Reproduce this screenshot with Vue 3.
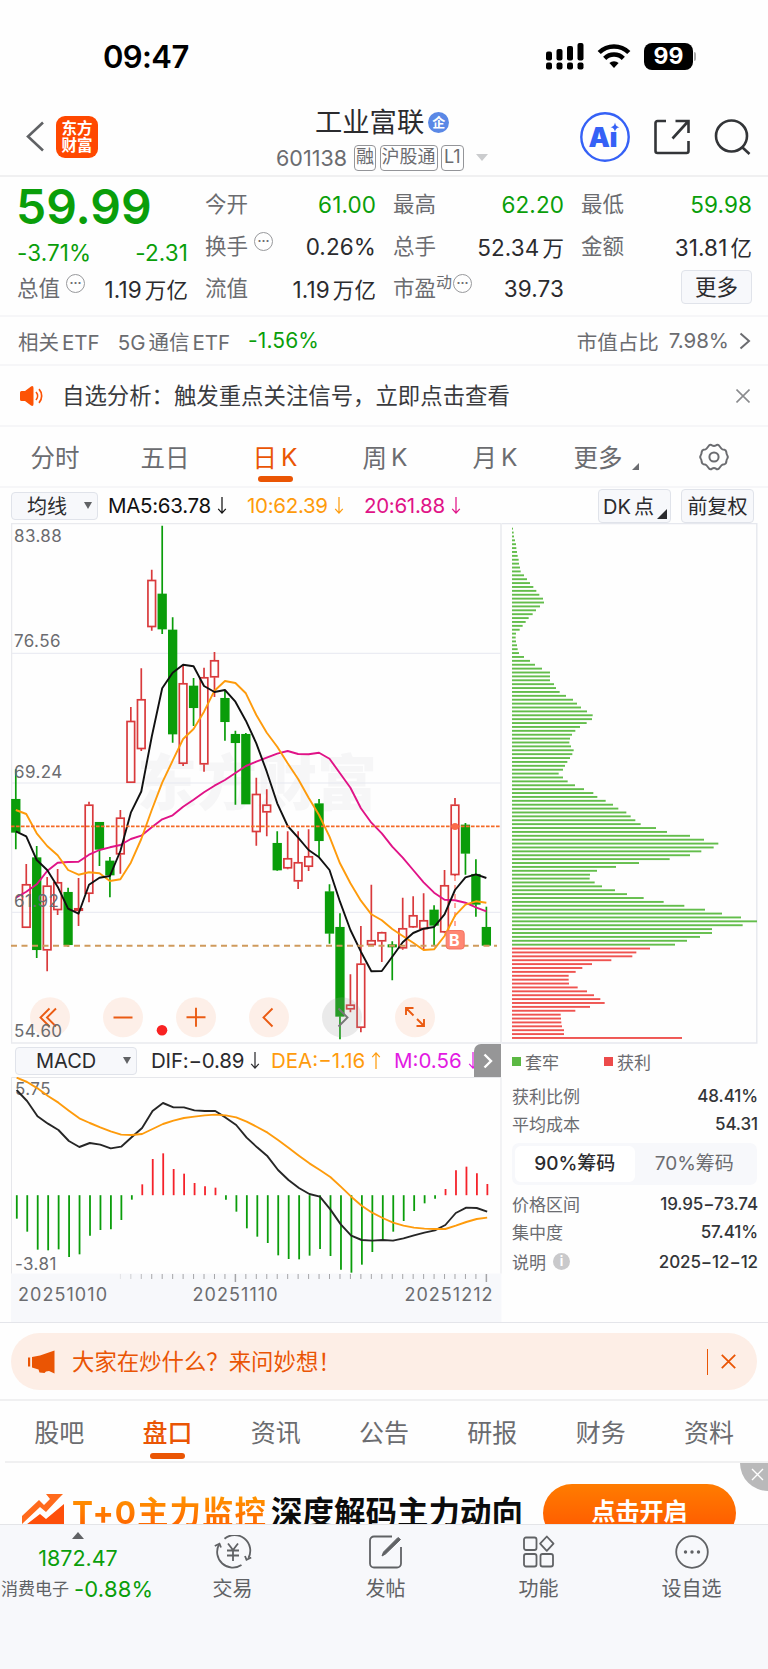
<template>
  <div class="page">
    <!-- Status bar -->
    <div class="status-bar">
      <span class="time">09:47</span>
      <div class="status-icons">
        <svg width="38" height="27" viewBox="0 0 38 27">
          <rect x="0" y="8.5" width="6" height="9" rx="2" />
          <rect x="10.5" y="6" width="6" height="11.500" rx="2" />
          <rect x="21" y="3" width="6" height="14.500" rx="2" />
          <rect x="31.500" y="0" width="6" height="17.500" rx="2" />
          <rect v-for="i in 4" :key="i" :x="(i - 1) * 10.5" y="19.500" width="6" height="7" rx="2" />
        </svg>
        <svg class="wifi" width="34" height="26" viewBox="0 0 34 26">
          <path d="M2.200 9.500a21 21 0 0 1 29.600 0" />
          <path d="M7.700 15.300a13.200 13.200 0 0 1 18.600 0" />
          <path d="M17 25l-4.600-5a6.600 6.600 0 0 1 9.200 0z" class="wifi-dot" />
        </svg>
        <div class="battery">99</div>
        <i class="battery-nub"></i>
      </div>
    </div>

    <!-- Header -->
    <header class="header">
      <svg class="back" width="20" height="31" viewBox="0 0 20 31"><path d="M18 1.500L3 15.500l15 14" /></svg>
      <div class="logo"><span>东方</span><span>财富</span></div>
      <div class="title-box">
        <div class="title-line">
          <h1>{{ stock.name }}</h1>
          <span class="ent-badge">企</span>
        </div>
        <div class="code-line">
          <span class="code">{{ stock.code }}</span>
          <span v-for="tag in stock.tags" :key="tag" class="tag">{{ tag }}</span>
          <i class="caret"></i>
        </div>
      </div>
      <div class="header-icons">
        <svg width="52" height="52" viewBox="0 0 52 52">
          <circle cx="26" cy="26" r="23.700" fill="none" stroke="#3561f6" stroke-width="2.400" />
          <text x="9.500" y="36" class="ai-text">A</text>
          <text x="30.500" y="36" class="ai-text">ı</text>
          <path d="M36 11.500c.8 3.200 1.500 3.900 4.500 4.700-3 .8-3.700 1.500-4.500 4.700-.8-3.200-1.500-3.900-4.500-4.700 3-.8 3.700-1.500 4.500-4.700z" fill="#3561f6" />
        </svg>
        <svg class="line-icon share" width="38" height="38" viewBox="0 0 38 38">
          <path d="M13 3H4.500a2 2 0 0 0-2 2v28a2 2 0 0 0 2 2h29a2 2 0 0 0 2-2V23" />
          <path d="M19.500 20.500L35 3.500M22.500 3H35.500v12" />
        </svg>
        <svg class="line-icon" width="38" height="38" viewBox="0 0 38 38">
          <circle cx="17.500" cy="18" r="15.500" /><path d="M28.500 29.500l7 6.500" />
        </svg>
      </div>
    </header>

    <!-- Quote -->
    <section class="quote">
      <div class="quote-col">
        <div class="big-price">59.99</div>
        <div class="q-row change down"><span>-3.71%</span><span>-2.31</span></div>
        <div class="q-row">
          <span class="label">总值<i class="tip">···</i></span><span>1.19<b>万亿</b></span>
        </div>
      </div>
      <div v-for="(col, c) in quoteCols" :key="c" class="quote-col">
        <div v-for="q in col" :key="q.label" class="q-row">
          <span class="label">{{ q.label }}<sup v-if="q.sup">{{ q.sup }}</sup><i v-if="q.tip" class="tip">···</i></span>
          <span :class="{ down: q.down }">{{ q.value }}<b v-if="q.unit">{{ q.unit }}</b></span>
        </div>
        <div v-if="c === 2" class="q-row more-row"><button class="more-btn">更多</button></div>
      </div>
    </section>

    <div class="etf-row">
      <span>相关<em>ETF</em></span>
      <span class="etf-name">5G<em>通信</em><em>ETF</em></span>
      <span class="etf-change down">-1.56%</span>
      <span class="etf-right">市值占比</span>
      <span class="etf-pct">7.98%</span>
      <svg width="12" height="18" viewBox="0 0 12 18"><path d="M1.500 1.500L10 9l-8.500 7.500" /></svg>
    </div>

    <div class="notice">
      <svg width="24" height="20" viewBox="0 0 24 20">
        <path d="M1.500 5H5L11 .4Q13.500-.6 13.500 2v16q0 2.600-2.500 1.600L5 15H1.500A1.500 1.500 0 0 1 0 13.500v-7A1.500 1.500 0 0 1 1.500 5z" fill="#fd5305" />
        <path d="M16 6a6 6 0 0 1 0 8M19 3.200a10 10 0 0 1 0 13.600" fill="none" stroke="#fd5305" stroke-width="1.700" />
      </svg>
      <span>自选分析：触发重点关注信号，立即点击查看</span>
      <svg class="close" width="14" height="14" viewBox="0 0 14 14"><path d="M.5.5l13 13M13.500.5l-13 13" /></svg>
    </div>

    <!-- Period tabs -->
    <nav class="period-tabs">
      <div v-for="p in periods" :key="p.zh + p.en" class="p-tab" :class="{ active: p.en === 'K' && p.zh === '日' }">
        {{ p.zh }}<em v-if="p.en">{{ p.en }}</em><i v-if="p.more" class="corner"></i>
      </div>
      <div class="p-tab">
        <svg class="gear" width="30" height="28" viewBox="0 0 30 28">
          <path d="M10 2.500Q11.500 1 13 2.300Q15 3.600 17 2.300Q18.500 1 20 2.500L22.300 5.500Q23.200 6.800 25.500 6.800Q27 7 27.300 9Q27.500 11.500 28.300 12.500Q29.300 14 28.300 15.500Q27.500 16.500 27.300 19Q27 21 25.500 21.200Q23.200 21.200 22.300 22.500L20 25.500Q18.500 27 17 25.700Q15 24.400 13 25.700Q11.500 27 10 25.500L7.700 22.500Q6.800 21.200 4.500 21.200Q3 21 2.700 19Q2.500 16.500 1.700 15.500Q.7 14 1.700 12.500Q2.500 11.500 2.700 9Q3 7 4.500 6.800Q6.800 6.800 7.700 5.500z" />
          <circle cx="15" cy="14" r="4.600" />
        </svg>
      </div>
    </nav>

    <!-- Moving averages -->
    <div class="ma-bar">
      <button class="select ma-select">均线<i></i></button>
      <span class="ma5">MA5:63.78<svg class="arrow" viewBox="0 0 10 20"><path d="M5 1v17M1 13.500L5 18l4-4.500" /></svg></span>
      <span class="ma10">10:62.39<svg class="arrow" viewBox="0 0 10 20"><path d="M5 1v17M1 13.500L5 18l4-4.500" /></svg></span>
      <span class="ma20">20:61.88<svg class="arrow" viewBox="0 0 10 20"><path d="M5 1v17M1 13.500L5 18l4-4.500" /></svg></span>
      <button class="tool-btn dk">DK<em>点</em><i></i></button>
      <button class="tool-btn">前复权</button>
    </div>

    <section class="charts">
      <div class="left-chart">
        <svg class="kline" width="491" height="521" viewBox="11 523 491 521">
          <text x="137" y="805" class="watermark">东方财富</text>
          <path d="M11 653.300h490M11 783h490M11 912.300h490" stroke="#e6e8f0" fill="none" />
          <path d="M11.500 523v520h489.500V523.500H11.500" stroke="#e9eaee" stroke-width="1.500" fill="none" />
          <g v-for="(k, i) in candles" :key="i" :class="k[4] ? 'rise' : 'fall'">
            <path :d="wick(k, i)" />
            <rect :x="px(i) - 3.800" :y="k[1] + 0.500" width="7.600" :height="Math.max(k[2] - k[1] - 1, 1)" />
          </g>
          <path d="M455 876v54" stroke="#ff8a7c" stroke-width="1.500" stroke-dasharray="5 4" />
          <polyline :points="line(ma20)" stroke="#e01387" class="curve" />
          <polyline :points="line(ma10)" stroke="#fe9b0c" class="curve" />
          <polyline :points="line(ma5)" stroke="#111" class="curve" />
          <path d="M11 826.400h490" stroke="#f56a26" stroke-width="1.700" stroke-dasharray="3.600 1.400" />
          <path d="M11 945.700h486" stroke="#cf9a5c" stroke-width="1.900" stroke-dasharray="6 4.500" />
          <circle cx="455" cy="826.600" r="3.500" fill="#fb6a4a" />
          <g>
            <rect x="446.200" y="930.500" width="18" height="18.500" rx="3" fill="#ff8673" stroke="#f37463" />
            <text x="449" y="946" class="b-mark">B</text>
          </g>
          <g class="ctrl">
            <circle v-for="x in [50, 123, 196, 269, 415]" :key="x" :cx="x" cy="1017.300" r="20" />
            <circle cx="342" cy="1017.300" r="20" class="off" />
            <path d="M49.500 1008.500l-9 9 9 9M56 1008.500l-9 9 9 9" />
            <path d="M113.500 1017.500h19M186.500 1017.300h19M196 1007.800v19" />
            <path d="M272.500 1008.500l-9 9 9 9" />
            <path d="M338.500 1008.500l9 9-9 9" stroke="#777" />
            <path d="M413.500 1015.500l-7.500-7.500M406 1015v-7h7.500M417 1019l7 7M424 1019v7h-7.500" />
          </g>
          <text v-for="l in priceLabels" :key="l[0]" x="14" :y="l[1]" class="axis-label">{{ l[0] }}</text>
          <circle cx="162" cy="1030.300" r="5.300" fill="#f82222" />
        </svg>

        <div class="macd-bar">
          <button class="select macd-select">MACD<i></i></button>
          <span class="dif">DIF:−0.89<svg class="arrow" viewBox="0 0 10 20"><path d="M5 1v17M1 13.500L5 18l4-4.500" /></svg></span>
          <span class="dea">DEA:−1.16<svg class="arrow" viewBox="0 0 10 20"><path d="M5 19V2M1 6.500L5 2l4 4.500" /></svg></span>
          <span class="m">M:0.56<svg class="arrow" viewBox="0 0 10 20"><path d="M5 1v17M1 13.500L5 18l4-4.500" /></svg></span>
          <button class="next"><svg width="10" height="16" viewBox="0 0 10 16"><path d="M1.500 1.500L8 8l-6.500 6.500" /></svg></button>
        </div>

        <svg class="macd" width="491" height="245" viewBox="11 1077 491 245">
          <rect x="11" y="1273.500" width="490.500" height="49" fill="#f7f8fb" />
          <path d="M11.500 1273.500V1077.500h489.500v196" stroke="#e6e7eb" fill="none" />
          <text x="15" y="1094.500" class="axis-label">5.75</text>
          <text x="15" y="1269.500" class="axis-label">-3.81</text>
          <path v-for="(v, i) in hist" :key="i" :d="`M${px(i) + 1} 1195.200V${1040 + v / 3}`" :stroke="v < 465 ? '#f5222a' : '#0a9d0a'" stroke-width="1.800" />
          <polyline :points="macdLine(dif)" stroke="#262626" class="curve" />
          <polyline :points="macdLine(dea)" stroke="#fe9b0c" class="curve" />
          <path v-for="i in 36" :key="'t' + i" :d="`M${px(i + 9)} 1274v${i === 12 || i === 36 ? 8 : 5}`" stroke="#a5a5a8" :stroke-width="i === 12 || i === 36 ? 1.500 : 1" :opacity="i < 4 ? i * 0.250 : 1" />
          <text x="18" y="1300.500" class="date" textLength="89">20251010</text>
          <text x="192.500" y="1300.500" class="date" textLength="85">20251110</text>
          <text x="404.500" y="1300.500" class="date" textLength="88">20251212</text>
        </svg>
      </div>

      <!-- Chip distribution -->
      <aside class="chips">
        <svg width="256" height="521" viewBox="502 523 256 521">
          <path d="M502 523.500h254.800v519.500H502" stroke="#e6e8ee" stroke-width="1.400" fill="none" />
          <rect v-for="(w, i) in chipBars" :key="i" x="512" :y="527.700 + i * 3.888" :width="w / 3" height="1.900" :fill="i < lossCount ? '#63bd4b' : '#ef5350'" />
        </svg>
        <div class="legend">
          <span><i class="g"></i>套牢</span><span><i class="r"></i>获利</span>
        </div>
        <div class="c-row"><span>获利比例</span><b>48.41%</b></div>
        <div class="c-row"><span>平均成本</span><b>54.31</b></div>
        <div class="segment"><span class="on">90%筹码</span><span>70%筹码</span></div>
        <div class="c-row"><span>价格区间</span><b>19.95−73.74</b></div>
        <div class="c-row"><span>集中度</span><b>57.41%</b></div>
        <div class="c-row last"><span>说明<i class="info">i</i></span><b>2025−12−12</b></div>
      </aside>
    </section>

    <!-- Ask bar -->
    <div class="ask-wrap">
      <div class="ask">
        <svg width="28" height="24" viewBox="0 0 28 24">
          <path d="M0 7.500h2.200v9H0zM4 7l8-1.500L26.500.5v23L21 21l-3 .5-1.500 1.500-5-.5-1-3L4 17.500z" fill="#ea5504" />
        </svg>
        <span>大家在炒什么？来问妙想！</span>
        <i class="bar"></i>
        <svg class="ask-close" width="15" height="15" viewBox="0 0 15 15"><path d="M.8.8l13.400 13.400M14.200.8L.8 14.200" /></svg>
      </div>
    </div>

    <nav class="info-tabs">
      <div v-for="t in infoTabs" :key="t" :class="{ active: t === '盘口' }">{{ t }}</div>
    </nav>

    <!-- Ad banner -->
    <div class="banner">
      <svg width="42" height="40" viewBox="0 0 42 40">
        <path d="M0 22L17 6l5 5 6-6-4-5h17l-4 4-13 14-6-5L0 30z" fill="#ff6a1c" />
        <path d="M0 34l18-14 6 5L42 10v30H0z" fill="#fe4f0a" />
      </svg>
      <span class="ad-hot">T+0主力监控</span>
      <span class="ad-text">深度解码主力动向</span>
      <div class="ad-btn">点击开启</div>
      <div class="ad-close"><svg width="13" height="13" viewBox="0 0 13 13"><path d="M1 1l11 11M12 1L1 12" /></svg></div>
    </div>

    <!-- Bottom bar -->
    <footer class="bottom-bar">
      <div class="index">
        <i class="up-tri"></i>
        <span class="index-num">1872.47</span>
        <span class="index-line">消费电子<b>-0.88%</b></span>
      </div>
      <div class="b-item">
        <svg width="38" height="34" viewBox="0 0 38 34">
          <path d="M10.500 3.700A15.700 15.700 0 0 1 34.500 23M27.500 30A15.700 15.700 0 0 1 5 9.500" />
          <path d="M.8 11l4.700-2.300L7 12.500M37.200 22.500l-4.700 2.300L31 21" />
          <path d="M14 8.500l5 6.500 5-6.500M19 15v11M13 15.500h12M13 20.500h12" />
        </svg>
        <span>交易</span>
      </div>
      <div class="b-item">
        <svg width="34" height="34" viewBox="0 0 34 34">
          <path d="M23 1.500H5a4 4 0 0 0-4 4v23a4 4 0 0 0 4 4h23a4 4 0 0 0 4-4V12" />
          <path d="M13 21l1.500-4L29 2.500l2.500 2L16.500 19z" fill="#606265" stroke-width="1" />
        </svg>
        <span>发帖</span>
      </div>
      <div class="b-item">
        <svg width="34" height="34" viewBox="0 0 34 34">
          <rect x="2" y="2.500" width="12.500" height="12.500" rx="2" />
          <rect x="2" y="19" width="12.500" height="12.500" rx="2" />
          <rect x="18.500" y="19" width="12.500" height="12.500" rx="2" />
          <path d="M24.800 1.500l6.700 7.200-6.700 7.200-6.700-7.200z" stroke-linejoin="round" />
        </svg>
        <span>功能</span>
      </div>
      <div class="b-item">
        <svg width="34" height="34" viewBox="0 0 34 34">
          <circle cx="17" cy="17" r="15.800" />
          <g fill="#606265" stroke="none"><circle cx="10.500" cy="17" r="1.700" /><circle cx="17" cy="17" r="1.700" /><circle cx="23.500" cy="17" r="1.700" /></g>
        </svg>
        <span>设自选</span>
      </div>
    </footer>
  </div>
</template>

<script setup>
const stock = { name: '工业富联', code: '601138', tags: ['融', '沪股通', 'L1'] };

const quoteCols = [
  [
    { label: '今开', value: '61.00', down: true },
    { label: '换手', value: '0.26%', tip: true },
    { label: '流值', value: '1.19', unit: '万亿' }
  ],
  [
    { label: '最高', value: '62.20', down: true },
    { label: '总手', value: '52.34', unit: '万' },
    { label: '市盈', value: '39.73', sup: '动', tip: true }
  ],
  [
    { label: '最低', value: '59.98', down: true },
    { label: '金额', value: '31.81', unit: '亿' }
  ]
];

const periods = [
  { zh: '分时' }, { zh: '五日' }, { zh: '日', en: 'K' }, { zh: '周', en: 'K' }, { zh: '月', en: 'K' }, { zh: '更多', more: true }
];
const infoTabs = ['股吧', '盘口', '资讯', '公告', '研报', '财务', '资料'];

const priceLabels = [['83.88', 542], ['76.56', 647], ['69.24', 777.5], ['61.92', 907], ['54.60', 1036.5]];

// [high, body top, body bottom, low, rising]
const candles = [
  [769.3, 799.3, 832.3, 849.3, 0], [864, 884.3, 927.7, 927.7, 1], [846, 857.7, 949.7, 958, 0], [877, 885.7, 950.3, 971.3, 1],
  [869, 882.3, 910, 915, 1], [887.7, 892.3, 944.7, 946.7, 0], [878, 908.3, 910.7, 926, 1], [801.7, 804.7, 893.7, 902.3, 1],
  [822, 822.3, 849.3, 866, 0], [857, 861, 875, 897.3, 0], [810, 817.7, 854.3, 873.7, 1], [707, 721, 782.7, 782.7, 1],
  [668.3, 699.3, 749, 751, 1], [569.7, 580, 627, 630.7, 1], [525.7, 594, 629, 634, 0], [617.3, 630, 734, 742.7, 0],
  [665, 683.3, 763.7, 766, 1], [678, 686, 707.7, 726, 0], [667.7, 677.3, 764.3, 771.7, 1], [652, 660.3, 677.3, 697, 1],
  [690.7, 698.3, 721.7, 740.7, 0], [730.7, 734.3, 742.7, 804.7, 0], [733, 734.3, 804, 804, 0], [777.7, 794, 832, 845.7, 1],
  [789.3, 804.7, 812.3, 836.3, 1], [831.3, 843.3, 870, 870.7, 0], [831.3, 858.3, 868.3, 869.3, 1], [831.3, 862.3, 881.3, 889, 1],
  [829.3, 856.3, 866.7, 871, 1], [799, 803.7, 840.7, 856.7, 0], [884.3, 891.7, 933.3, 943.7, 0], [913.3, 927.3, 1016.3, 1039.3, 0],
  [974.3, 1004.7, 1009.3, 1012.3, 1], [926, 963.7, 1027.7, 1032.3, 1], [884.7, 940.3, 945, 946, 1], [931.7, 932.3, 941.3, 962, 1],
  [941.3, 944.7, 947, 980.3, 0], [897.7, 928.3, 948.3, 949.7, 1], [896.3, 915.3, 927.3, 928, 1], [893.3, 920.3, 929, 949.7, 1],
  [905.3, 910, 925.3, 945, 0], [870, 885.3, 932.3, 933.3, 1], [798, 804.7, 875, 876, 1], [823, 825, 853.3, 874.7, 0],
  [859.3, 874.3, 904.3, 916.7, 0], [906.7, 927.3, 945.3, 945.3, 0]
];

const ma5 = [831.3, 836.3, 860, 870, 886.7, 908.7, 913.7, 884.7, 877.7, 876, 851, 812.7, 791.5, 736.7, 688.3, 672.7, 664.7, 666.3, 686, 692, 690, 701.7, 720.7, 743.3, 771.7, 803.3, 826, 837.7, 850, 857.3, 870, 901.7, 930, 951.7, 971.3, 971, 956.7, 942.3, 933, 928.7, 927, 914.3, 890, 877.3, 874.3, 878];
const ma10 = [810, 814, 833.3, 846, 855.3, 870, 874.7, 872.3, 873.3, 881, 879.3, 862.7, 839, 810, 782.7, 760.7, 739, 729, 711.7, 690.7, 681, 683, 693.3, 715, 732.7, 746.7, 763.3, 779, 797.7, 815, 836.7, 863.3, 883.3, 900.7, 914.3, 920.3, 929, 936, 942.7, 950, 949.3, 936, 915.7, 904.7, 901.3, 902.7];
const ma20 = [897.7, 891.7, 884.3, 871, 862.7, 862, 861.7, 854.7, 850, 847.3, 845, 839, 835.7, 827.3, 819.3, 815.3, 806.7, 799.7, 792.3, 785.7, 780, 773, 766, 761.7, 757.7, 753.7, 751, 754, 754.3, 752.7, 758.7, 773.3, 787.7, 808.3, 822.7, 833.3, 846.7, 857.7, 870, 882.3, 892.7, 899.7, 900.3, 902.7, 907.3, 911.3];

const hist = [536, 575, 629, 631, 628, 651, 643, 587, 570, 568, 540, 479, 433, 357, 340, 387, 401, 429, 439, 443, 479, 515, 565, 590, 609, 646, 657, 658, 647, 627, 648, 689, 698, 674, 636, 600, 575, 543, 513, 490, 476, 447, 391, 380, 400, 432];
const dif = [150, 183, 229, 251, 270, 303, 321, 309, 314, 325, 320, 292, 264, 213, 189, 202, 202, 211, 213, 213, 233, 255, 293, 322, 349, 390, 420, 444, 462, 470, 508, 553, 587, 600, 602, 600, 602, 595, 586, 578, 571, 555, 519, 503, 504, 515];
const dea = [113, 126, 145, 168, 188, 212, 235, 249, 262, 274, 284, 285, 282, 267, 252, 242, 234, 230, 226, 224, 226, 232, 245, 261, 278, 300, 323, 347, 370, 390, 411, 440, 470, 497, 518, 534, 548, 557, 563, 566, 567, 567, 557, 546, 537, 533];

const lossBars = [3, 5, 6, 9, 12, 13, 15, 17, 20, 21, 24, 26, 36, 45, 54, 64, 73, 82, 93, 96, 84, 72, 62, 50, 41, 32, 23, 12, 11, 12, 15, 17, 21, 36, 54, 69, 90, 114, 114, 114, 126, 132, 143, 162, 183, 195, 207, 225, 242, 240, 224, 204, 190, 180, 174, 172, 177, 185, 181, 174, 166, 159, 153, 140, 153, 167, 189, 216, 244, 256, 281, 303, 319, 343, 356, 370, 386, 432, 465, 534, 576, 619, 605, 568, 534, 473, 381, 312, 255, 234, 233, 248, 270, 309, 345, 395, 455, 517, 579, 630, 687, 735, 692, 600, 600, 564, 525, 489];
const profitBars = [414, 373, 361, 298, 240, 211, 191, 170, 170, 171, 197, 225, 246, 265, 278, 234, 190, 146, 147, 148, 150, 156, 156, 510];
const lossCount = lossBars.length;
const chipBars = [...lossBars, ...profitBars];

const px = (i) => +(15.8 + i * 10.457).toFixed(2);
const wick = (k, i) => `M${px(i)} ${k[0]}V${k[1]}M${px(i)} ${k[2]}V${k[3]}`;
const line = (arr) => arr.map((y, i) => `${px(i)},${y}`).join(' ');
const macdLine = (arr) => arr.map((v, i) => `${px(i) + 0.8},${1040 + v / 3}`).join(' ');
</script>

<style>
body { background: #fff; }
</style>

<style scoped>
.page { width: 768px; height: 1669px; overflow: hidden; background: #fefefe; font-family: Inter, "Noto Sans CJK SC", sans-serif; color: #2b2b2e; }
.page * { box-sizing: border-box; }
button { font-family: inherit; color: inherit; padding: 0; border: 1px solid #e0e3ea; background: #f7f8fb; border-radius: 4px; white-space: nowrap; }
em, i { font-style: normal; }
svg { display: block; flex: none; }
.down { color: #0a9e0a; }

/* Status bar */
.status-bar { height: 98px; padding: 14px 72px 0 103px; display: flex; align-items: center; justify-content: space-between; color: #000; }
.time { font-size: 31px; font-weight: 600; letter-spacing: -0.6px; padding-top: 1px; }
.status-icons { display: flex; align-items: center; }
.wifi { margin: 0 13px 0 13px; fill: none; stroke: #000; stroke-width: 4.5; }
.wifi-dot { fill: #000; stroke: none; }
.battery { width: 49px; height: 27px; border-radius: 8px; background: #000; color: #fff; font-size: 23px; font-weight: 700; line-height: 27px; text-align: center; }
.battery-nub { width: 2px; height: 9px; margin-left: 1px; border-radius: 0 2px 2px 0; background: #aaa; }

/* Header */
.header { height: 79px; display: flex; align-items: center; padding: 0 16px 0 25px; border-bottom: 2px solid #f0f0f1; }
.back { fill: none; stroke: #606265; stroke-width: 2.6; }
.logo { width: 42px; height: 42px; margin-left: 11px; border-radius: 9px; background: #ff4800; color: #fff; font-size: 15.500px; line-height: 17.500px; font-weight: 700; display: flex; flex-direction: column; align-items: center; justify-content: center; padding-bottom: 1px; font-family: "Noto Sans CJK SC", sans-serif; }
.title-box { width: 232px; margin-left: 178px; }
.title-line { display: flex; align-items: center; height: 42px; padding: 6px 0 0 39px; }
h1 { margin: 0; font-size: 27.300px; font-weight: 400; line-height: 34px; }
.ent-badge { width: 21px; height: 21px; margin-left: 4px; border-radius: 50%; background: #5a88e6; color: #fff; font-size: 13px; line-height: 20px; text-align: center; font-weight: 700; }
.code-line { display: flex; align-items: center; height: 34px; color: #6b6c70; }
.code { width: 72px; font-size: 21.500px; letter-spacing: 0; margin-right: 6px; }
.tag { height: 26px; flex: none; padding: 0 1px; margin-right: 3.500px; border: 1.500px solid #949599; border-radius: 4px; font-size: 18px; line-height: 22px; white-space: nowrap; }
.tag:nth-of-type(4) { padding: 0 2px; }
.caret { margin-left: 9px; border: 6px solid transparent; border-top: 7px solid #cbccce; border-bottom: 0; }
.header-icons { display: flex; align-items: center; margin-left: auto; }
.ai-text { font-size: 27px; font-weight: 900; fill: #3561f6; }
.line-icon { fill: none; stroke: #333538; stroke-width: 2.6; }
.share { margin: 0 23px 0 22px; }

/* Quote */
.quote { height: 140px; padding: 6px 16px 0 17px; display: flex; justify-content: space-between; border-bottom: 2px solid #f6f6f8; font-size: 22.500px; }
.quote-col { width: 171px; }
.big-price { height: 46px; margin-left: -1px; font-size: 48px; line-height: 47px; font-weight: 600; color: #0a9e0a; letter-spacing: 0; }
.q-row { height: 42px; display: flex; align-items: center; justify-content: space-between; letter-spacing: 0.1px; white-space: nowrap; }
.q-row b { font-weight: 400; margin-left: 3px; font-size: 21.500px; }
.change { height: 38px; padding-top: 8px; }
.label { color: #6b6c70; font-size: 21.500px; letter-spacing: 0; display: flex; align-items: center; margin-top: -3px; }
.label sup { font-size: 16px; line-height: 16px; margin-bottom: 10px; vertical-align: baseline; }
.tip { width: 19px; height: 19px; margin: 0 0 7px 6px; border: 1.500px solid #98999c; border-radius: 50%; font-size: 12px; line-height: 15px; text-align: center; letter-spacing: 0; font-weight: 700; }
sup + .tip { margin-left: 1px; }
.more-row { justify-content: flex-end; }
.more-btn { width: 71px; height: 34px; margin-top: -3px; font-size: 21.500px; letter-spacing: 0; line-height: 30px; }

.etf-row { height: 49px; padding: 0 17px 0 18px; display: flex; align-items: center; font-size: 20.500px; color: #6b6c70; border-bottom: 2px solid #f6f6f8; }
.etf-row em { margin-left: 3px; }
.etf-name { margin: 0 18px 0 18px; }
.etf-change { font-size: 21px; letter-spacing: 0.1px; }
.etf-right { margin-left: auto; margin-right: 10px; }
.etf-row svg { margin-left: 10px; fill: none; stroke: #6b6c70; stroke-width: 2; }

.notice { height: 61px; padding: 0 18px 0 20px; display: flex; align-items: center; font-size: 22.400px; color: #3a3b3e; border-bottom: 2px solid #f6f6f8; }
.notice span { margin-left: 18px; padding-bottom: 3px; }
.close { margin-left: auto; fill: none; stroke: #8a8b8e; stroke-width: 1.6; }

/* Period tabs */
.period-tabs { height: 61px; display: grid; grid-template-columns: repeat(6, 110px) 108px; border-bottom: 2px solid #f6f6f8; font-size: 24.500px; color: #6b6c70; }
.p-tab { position: relative; display: flex; align-items: center; justify-content: center; }
.p-tab em { margin-left: 4px; }
.active { color: #ea5504; }
.p-tab.active::after { content: ""; position: absolute; bottom: 4px; width: 35px; height: 6px; border-radius: 3px; background: #ea5504; }
.corner { margin: 20px -2px 0 9px; border-left: 7px solid transparent; border-bottom: 7px solid #6b6c70; }
.gear { fill: none; stroke: #6b6c70; stroke-width: 2; stroke-linejoin: round; }

/* Moving averages */
.ma-bar { height: 35px; padding: 0 14px 0 11px; display: flex; align-items: center; font-size: 20.500px; letter-spacing: -0.3px; }
.ma-bar span, .macd-bar span { display: flex; align-items: center; white-space: nowrap; }
.select { display: flex; align-items: center; color: #2b2b2e; }
.select i { margin-left: auto; border: 4px solid transparent; border-top: 7px solid #606265; border-bottom: 0; }
.ma-select { width: 87px; height: 28px; padding: 0 5px 1px 15px; margin-right: 10px; font-size: 20px; }
.arrow { width: 10px; height: 19px; margin-left: 6px; fill: none; stroke: currentColor; stroke-width: 1.3; }
.ma5 { width: 139px; color: #111; }
.ma10 { width: 117px; color: #fe9b0c; }
.ma20 { color: #e01387; }
.tool-btn { position: relative; width: 73px; height: 34px; font-size: 20px; margin-left: 10px; }
.dk { margin-left: auto; padding-right: 12px; }
.dk em { margin-left: 3px; }
.dk i { position: absolute; right: 3px; bottom: 3px; border-left: 10px solid transparent; border-bottom: 10px solid #2b2b2e; }

/* Charts */
.charts { height: 800px; display: flex; padding-left: 11px; border-bottom: 1px solid #e4e5ea; }
.left-chart { width: 491px; }
.watermark { font-size: 60px; font-weight: 900; fill: #f6f6f7; }
.axis-label { font-size: 17px; letter-spacing: 0.4px; fill: #6b6c70; }
.date { font-size: 18px; fill: #6b6c70; }
.rise { fill: none; stroke: #d93a3c; stroke-width: 1.7; }
.fall { fill: #0a9d0a; stroke: #0a9d0a; stroke-width: 1.7; }
.curve { fill: none; stroke-width: 1.9; stroke-linejoin: round; }
.b-mark { font-size: 16px; font-weight: 700; fill: #fff; }
.ctrl circle { fill: #fdeee6; fill-opacity: 0.92; }
.ctrl circle.off { fill: #999; fill-opacity: 0.2; }
.ctrl path { fill: none; stroke: #ea5b13; stroke-width: 1.9; }
.ctrl path[stroke] { stroke: #777; }
.macd-bar { height: 33px; display: flex; align-items: center; padding-left: 4px; font-size: 20.500px; }
.macd-select { width: 122px; height: 28px; padding: 0 5px 0 20px; font-size: 20px; }
.dif { width: 120px; margin-left: 14px; letter-spacing: -0.2px; }
.dea { width: 123px; color: #fe9b0c; }
.macd-bar .m { width: 80px; overflow: hidden; color: #e21be2; }
.next { width: 27px; height: 34px; border: 0; border-radius: 7px 0 0 0; background: #969697; display: flex; align-items: center; justify-content: center; }
.next path { fill: none; stroke: #fff; stroke-width: 2.4; }

/* Chip distribution */
.chips { width: 256px; color: #6b6c70; font-size: 17px; }
.legend { display: flex; height: 35px; padding: 0 0 1px 10px; align-items: center; }
.legend span { width: 92px; display: flex; align-items: center; }
.legend i { width: 9px; height: 9px; margin-right: 4px; }
.g { background: #5bb843; }
.r { background: #ec4a4a; }
.c-row { height: 28px; margin: 0 0 0 10px; display: flex; align-items: center; justify-content: space-between; }
.legend + .c-row { margin-top: 3px; }
.c-row b { font-weight: 500; color: #333538; letter-spacing: -0.1px; }
.c-row span { display: flex; align-items: center; padding-bottom: 2px; }
.last { margin-top: 2px; }
.segment { height: 42px; margin: 5px 1px 5px 10px; padding: 3px; display: flex; border-radius: 7px; background: #f7f8fb; font-size: 19px; }
.segment span { flex: 1; line-height: 35px; text-align: center; border-radius: 6px; }
.segment .on { background: #fff; color: #2b2b2e; font-weight: 500; }
.info { width: 17px; height: 17px; margin-left: 7px; border-radius: 50%; background: #c9c9cb; color: #fff; font-size: 13px; line-height: 17px; text-align: center; font-weight: 700; }

/* Ask bar */
.ask-wrap { height: 78px; padding: 10px 11px; border-bottom: 2px solid #f0f0f1; }
.ask { height: 57px; padding: 0 21px 0 17px; border-radius: 29px; background: #fdeee6; color: #ea5504; display: flex; align-items: center; font-size: 22.400px; }
.ask span { margin-left: 16px; padding-bottom: 3px; }
.bar { width: 1.500px; height: 26px; margin: 0 13px 0 auto; background: #ea5504; }
.ask-close { fill: none; stroke: #ea5504; stroke-width: 1.8; }

.info-tabs { height: 62px; margin-left: 5px; display: grid; grid-template-columns: repeat(7, 108.300px); font-size: 25px; color: #6b6c70; border-bottom: 2px solid #f0f0f1; }
.info-tabs div { position: relative; display: flex; align-items: center; justify-content: center; padding-bottom: 1px; }
.info-tabs .active { color: #ea5504; font-weight: 500; }
.info-tabs .active::after { content: ""; position: absolute; bottom: 2px; width: 35px; height: 6px; border-radius: 3px; background: #ea5504; }

/* Ad banner */
.banner { position: relative; height: 61px; padding-left: 22px; display: flex; align-items: flex-start; overflow: hidden; font-size: 31.500px; line-height: 40px; font-weight: 700; }
.banner > svg { margin-top: 31px; }
.banner span { margin-top: 30px; white-space: nowrap; }
.ad-hot { width: 199px; margin-left: 8px; letter-spacing: 1px; background: linear-gradient(#ff9a00, #ff5a00); background-clip: text; -webkit-background-clip: text; color: transparent; }
.ad-text { width: 272px; color: #0c0c0c; }
.ad-btn { width: 193px; height: 58px; margin-top: 21px; border-radius: 29px; background: linear-gradient(#ff7c00, #ff5200); color: #fff; font-size: 24px; line-height: 55px; text-align: center; }
.ad-close { position: absolute; top: 0; right: 0; width: 28px; height: 28px; border-radius: 0 0 0 28px; background: #b9b9ba; }
.ad-close svg { margin: 5px 0 0 11px; fill: none; stroke: #fff; stroke-width: 1.4; }

/* Bottom bar */
.bottom-bar { height: 146px; display: flex; background: #f7f8fb; border-top: 1px solid #e4e5e8; color: #606265; }
.index { width: 156px; display: flex; flex-direction: column; align-items: center; }
.up-tri { margin-top: 7px; border: 6px solid transparent; border-bottom: 7px solid #606265; border-top: 0; }
.index-num { margin-top: 6px; font-size: 21.500px; line-height: 26px; color: #0a9e0a; }
.index-line { width: 156px; padding-left: 1px; margin-top: 4px; display: flex; align-items: center; font-size: 17px; line-height: 28px; white-space: nowrap; }
.index-line b { margin-left: 5px; font-size: 22px; letter-spacing: 0.2px; font-weight: 400; color: #0a9e0a; }
.b-item { width: 153px; padding-top: 10px; display: flex; flex-direction: column; align-items: center; font-size: 20px; }
.b-item svg { fill: none; stroke: #606265; stroke-width: 1.8; }
.b-item span { margin-top: 6px; line-height: 28px; }
</style>
